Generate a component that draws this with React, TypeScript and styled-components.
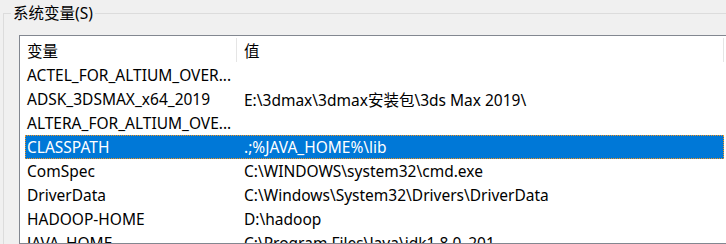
import React, { FC } from "react";
import styled, { createGlobalStyle } from "styled-components";

const GlobalStyle = createGlobalStyle`
  html, body {
    margin: 0;
    padding: 0;
    background: #f0f0f0;
  }
`;

const Page = styled.div`
  width: 726px;
  height: 244px;
  overflow: hidden;
  background: #f0f0f0;
  font-family: "Noto Sans", "Noto Sans CJK SC", sans-serif;
  font-size: 15.5px;
  color: #000;
`;

const GroupBox = styled.fieldset`
  margin: 0 0 0 3px;
  padding: 0 0 0 15px;
  width: 760px;
  height: 300px;
  border: 1px solid #dcdcdc;
  box-sizing: border-box;
`;

const Legend = styled.legend`
  margin-left: -8px;
  padding: 0 2px;
  line-height: 26px;
  font-family: "Noto Sans", "Noto Sans CJK SC", sans-serif;
`;

const ListView = styled.div`
  margin-top: 9px;
  width: 720px;
  height: 207px;
  border: 1px solid #828790;
  background: #fff;
  overflow: hidden;
`;

const Header = styled.div`
  display: grid;
  grid-template-columns: 217px 487px;
  height: 27px;
`;

const HeaderCell = styled.div`
  display: flex;
  align-items: center;
  padding-left: 7px;
  border-right: 1px solid #e5e5e5;
  margin: 2px 0 1px;
  box-sizing: border-box;
`;

const Row = styled.div<{ $selected?: boolean }>`
  display: grid;
  grid-template-columns: 212px 487px;
  height: 24px;
  margin-left: 5px;
  width: 699px;
  box-sizing: border-box;
  background: ${(p) => (p.$selected ? "#0078d7" : "transparent")};
  color: ${(p) => (p.$selected ? "#fff" : "#000")};
  border: 1px dotted ${(p) => (p.$selected ? "#f7941d" : "transparent")};
`;

const Cell = styled.div<{ $first?: boolean }>`
  display: flex;
  align-items: center;
  padding-left: ${(p) => (p.$first ? "1px" : "6px")};
  white-space: nowrap;
  overflow: hidden;
`;

interface IVariable {
  name: string;
  value: string;
}

const variables: IVariable[] = [
  { name: "ACTEL_FOR_ALTIUM_OVER...", value: "" },
  { name: "ADSK_3DSMAX_x64_2019", value: "E:\\3dmax\\3dmax安装包\\3ds Max 2019\\" },
  { name: "ALTERA_FOR_ALTIUM_OVE...", value: "" },
  { name: "CLASSPATH", value: ".;%JAVA_HOME%\\lib" },
  { name: "ComSpec", value: "C:\\WINDOWS\\system32\\cmd.exe" },
  { name: "DriverData", value: "C:\\Windows\\System32\\Drivers\\DriverData" },
  { name: "HADOOP-HOME", value: "D:\\hadoop" },
  { name: "JAVA_HOME", value: "C:\\Program Files\\Java\\jdk1.8.0_201" },
];

const App: FC = () => {
  return (
    <Page>
      <GlobalStyle />
      <GroupBox>
        <Legend>系统变量(S)</Legend>
        <ListView>
          <Header>
            <HeaderCell>变量</HeaderCell>
            <HeaderCell>值</HeaderCell>
          </Header>
          {variables.map((v) => (
            <Row key={v.name} $selected={v.name === "CLASSPATH"}>
              <Cell $first>{v.name}</Cell>
              <Cell>{v.value}</Cell>
            </Row>
          ))}
        </ListView>
      </GroupBox>
    </Page>
  );
};

export default App;
